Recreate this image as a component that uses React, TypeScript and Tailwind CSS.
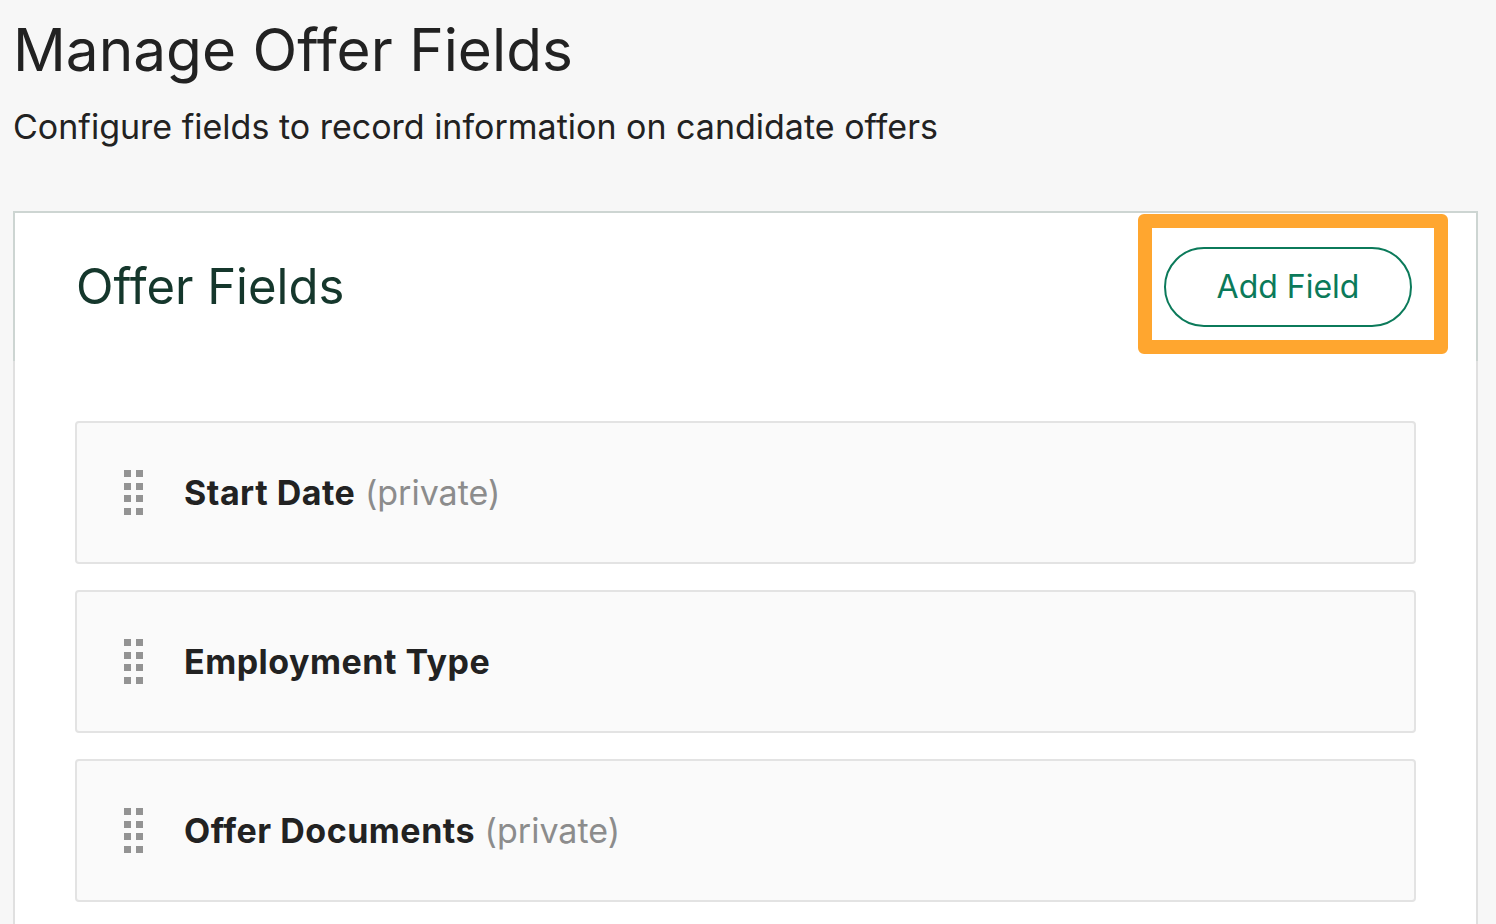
import React from "react";

type Field = { name: string; isPrivate?: boolean };

const fields: Field[] = [
  { name: "Start Date", isPrivate: true },
  { name: "Employment Type" },
  { name: "Offer Documents", isPrivate: true },
];

function DragHandle() {
  return (
    <div className="grid grid-cols-2 gap-x-[5px] gap-y-[5.5px]">
      {Array.from({ length: 8 }).map((_, i) => (
        <span key={i} className="block h-[7px] w-[7px] bg-[#939393]" />
      ))}
    </div>
  );
}

function FieldRow({ field }: { field: Field }) {
  return (
    <div className="flex h-[143px] items-center rounded-[4px] border-2 border-[#e3e3e3] bg-[#fafafa] pl-[47px]">
      <DragHandle />
      <div className="ml-[41px] text-[34px] text-[#222]">
        <span className="font-bold tracking-[0.5px]">{field.name}</span>
        {field.isPrivate && <span className="text-[#8c8c8c]"> (private)</span>}
      </div>
    </div>
  );
}

export default function App() {
  return (
    <div
      className="min-h-screen bg-[#f7f7f7] pt-[14px]"
      style={{ fontFamily: "Inter, 'Noto Sans', sans-serif" }}
    >
      <div className="pl-[13px]">
        <h1 className="text-[58.5px] leading-[72px] font-normal text-[#222]">Manage Offer Fields</h1>
        <p className="mt-[21px] text-[34px] leading-[40px] text-[#222]">
          Configure fields to record information on candidate offers
        </p>
      </div>

      <div className="ml-[13px] mr-[18px] mt-[64px]">
        <div className="flex h-[150px] items-center justify-between border-2 border-b-0 border-[#cdd5d2] bg-white pl-[61px] pr-[64px]">
          <h2 className="text-[49px] font-normal text-[#15372c]">Offer Fields</h2>
          <div className="relative">
            <button className="flex h-[80px] w-[248px] items-center justify-center rounded-full border-2 border-[#0b7a5a] text-[32px] text-[#0b7a5a]">
              Add Field
            </button>
            <div className="pointer-events-none absolute -left-[26px] -top-[33px] h-[140px] w-[310px] rounded-[6px] border-[14px] border-[#ffa62f]" />
          </div>
        </div>
        <div className="flex flex-col gap-[26px] border-x-2 border-[#e0e0e0] bg-white px-[60px] pt-[60px] pb-[40px]">
          {fields.map((f) => (
            <FieldRow key={f.name} field={f} />
          ))}
        </div>
      </div>
    </div>
  );
}
